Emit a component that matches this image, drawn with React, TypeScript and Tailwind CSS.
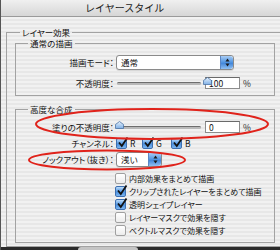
const FONT = { fontFamily: '"Noto Sans CJK JP", "Noto Sans", sans-serif' };

function Stepper() {
  return (
    <span className="flex h-full w-[13px] items-center justify-center rounded-r-[3px] border-l border-[#5b86c4] bg-[linear-gradient(to_bottom,#a9cdf5,#4f93e0_50%,#3a7fd6_51%,#8fc0f2)]">
      <svg width="5" height="9" viewBox="0 0 5 9">
        <path d="M2.5 0.5 L4.5 3.5 L0.5 3.5 Z" fill="#1a1a1a" />
        <path d="M2.5 8.5 L4.5 5.5 L0.5 5.5 Z" fill="#1a1a1a" />
      </svg>
    </span>
  );
}

function Select({ value, width }: { value: string; width: string }) {
  return (
    <div className={`flex h-[15px] ${width} items-center rounded-[3px] border border-[#8a8a8a] bg-white shadow-[0_1px_0_#d8d8d8]`}>
      <span className="flex-1 pl-[4px] text-[8.5px] leading-none text-[#111]">{value}</span>
      <Stepper />
    </div>
  );
}

function Thumb() {
  return (
    <svg width="9" height="8" viewBox="0 0 9 8" className="absolute top-[-4px]">
      <defs>
        <linearGradient id="th" x1="0" y1="0" x2="0" y2="1">
          <stop offset="0" stopColor="#e8f2fc" />
          <stop offset="1" stopColor="#7fb0e6" />
        </linearGradient>
      </defs>
      <path d="M4.5 0.5 L8.5 3.5 L8.5 7.5 L0.5 7.5 L0.5 3.5 Z" fill="url(#th)" stroke="#4d73a6" strokeWidth="0.8" />
    </svg>
  );
}

function Slider({ full }: { full: boolean }) {
  return (
    <div className="relative flex h-[12px] w-[84px] items-center">
      <div className="h-[3px] w-full rounded-full border-t border-[#6e6e6e] bg-[#b9b9b9]" />
      <div className={`absolute top-[4px] ${full ? "right-[-2px]" : "left-[-2px]"}`}>
        <Thumb />
      </div>
    </div>
  );
}

function NumField({ value }: { value: string }) {
  return (
    <div className="ml-[4px] flex items-center">
      <div className="flex h-[12px] w-[35px] items-center border border-[#8c8c8c] border-t-[#6a6a6a] bg-white pl-[3px] text-[8.5px] leading-none text-[#111]">
        {value}
      </div>
      <span className="ml-[3px] text-[8.5px] text-[#222]">%</span>
    </div>
  );
}

function Check({ on }: { on: boolean }) {
  if (!on)
    return <span className="block h-[11px] w-[11px] shrink-0 rounded-[2px] border border-[#a0a0a0] bg-[linear-gradient(to_bottom,#ffffff,#ececec)]" />;
  return (
    <span className="relative block h-[11px] w-[11px] shrink-0 rounded-[2px] border border-[#3d6fb0] bg-[linear-gradient(to_bottom,#bcdcfa,#4b91e0_55%,#7db5ef)]">
      <svg width="12" height="12" viewBox="0 0 12 12" className="absolute left-[0px] top-[-3px]">
        <path d="M2 6.5 L4.8 10 L10.5 1.5" fill="none" stroke="#111" strokeWidth="1.8" />
      </svg>
    </span>
  );
}

const OPTIONS = [
  { label: "内部効果をまとめて描画", on: false },
  { label: "クリップされたレイヤーをまとめて描画", on: true },
  { label: "透明シェイプレイヤー", on: true },
  { label: "レイヤーマスクで効果を隠す", on: false },
  { label: "ベクトルマスクで効果を隠す", on: false },
];

function Label({ children }: { children: string }) {
  return (
    <span className="w-[99px] shrink-0 pr-[1px] text-right text-[8.5px] leading-none text-[#111] [font-feature-settings:'palt']">
      {children}
    </span>
  );
}

export default function App() {
  return (
    <div className="relative flex h-[250px] w-[280px] flex-col overflow-hidden border-l border-[#555]" style={FONT}>
      {/* title bar */}
      <div className="flex h-[17px] shrink-0 items-center border-b border-[#9a9a9a] bg-[linear-gradient(to_bottom,#f0f0f0,#d6d6d6)] pl-[84px] text-[10px] leading-none text-[#1a1a1a]">
        レイヤースタイル
      </div>

      <div className="h-[230px] shrink-0 bg-[repeating-linear-gradient(to_bottom,#f1f1f1_0px,#f1f1f1_2px,#e7e7e7_2px,#e7e7e7_4px)] pt-[9px]">
        <fieldset className="ml-[5px] w-[275px] border border-[#a2a2a2] pb-[3px] pl-[8px]">
          <legend className="ml-[5px] px-[2px] text-[8.5px] leading-[12px] text-[#111] [font-feature-settings:'palt']">レイヤー効果</legend>

          <fieldset className="w-[260px] border border-[#a2a2a2] pb-[6px]">
            <legend className="ml-[12px] px-[2px] text-[8.5px] leading-[11px] text-[#111]">通常の描画</legend>
            <div className="mt-[6px] flex h-[15px] items-center">
              <Label>描画モード：</Label>
              <div className="ml-[1px]">
                <Select value="通常" width="w-[118px]" />
              </div>
            </div>
            <div className="mt-[7px] flex h-[12px] items-center">
              <Label>不透明度：</Label>
              <div className="ml-[2px] flex items-center">
                <Slider full />
                <NumField value="100" />
              </div>
            </div>
          </fieldset>

          <fieldset className="mt-[7px] w-[260px] border border-[#a2a2a2] pb-[5px]">
            <legend className="ml-[12px] px-[2px] text-[8.5px] leading-[12px] text-[#111]">高度な合成</legend>
            <div className="mt-[6px] flex h-[12px] items-center">
              <Label>塗りの不透明度：</Label>
              <div className="ml-[2px] flex items-center">
                <Slider full={false} />
                <NumField value="0" />
              </div>
            </div>
            <div className="mt-[5px] flex h-[11px] items-center">
              <Label>チャンネル：</Label>
              <div className="ml-[1px] flex items-center text-[8.5px] leading-none text-[#111]">
                <span className="flex w-[26px] items-center gap-[3px]"><Check on />R</span>
                <span className="flex w-[29px] items-center gap-[3px]"><Check on />G</span>
                <span className="flex items-center gap-[3px]"><Check on />B</span>
              </div>
            </div>
            <div className="mt-[3px] flex h-[15px] items-center">
              <Label>ノックアウト（抜き）：</Label>
              <div className="ml-[1px]">
                <Select value="浅い" width="w-[46px]" />
              </div>
            </div>
            <div className="mt-[5px] flex flex-col pl-[99px]">
              {OPTIONS.map((o) => (
                <div
                  key={o.label}
                  className="flex h-[13px] items-center gap-[3px] whitespace-nowrap text-[8px] leading-none text-[#111] [font-feature-settings:'palt']"
                >
                  <Check on={o.on} />
                  <span>{o.label}</span>
                </div>
              ))}
            </div>
          </fieldset>
        </fieldset>
      </div>

      {/* bottom edge with button top */}
      <div className="h-[3px] shrink-0 bg-[#2a2a2a]">
        <div className="ml-[77px] h-[3px] w-[60px] rounded-t-[3px] bg-[#c4c4c4]" />
      </div>

      {/* red annotation ellipses */}
      <svg className="pointer-events-none absolute inset-0" width="280" height="250" viewBox="0 0 280 250">
        <ellipse cx="151" cy="124" rx="116" ry="15" fill="none" stroke="#e0231b" strokeWidth="2" />
        <ellipse cx="106" cy="160" rx="78" ry="9.5" fill="none" stroke="#e0231b" strokeWidth="2" />
      </svg>
    </div>
  );
}
